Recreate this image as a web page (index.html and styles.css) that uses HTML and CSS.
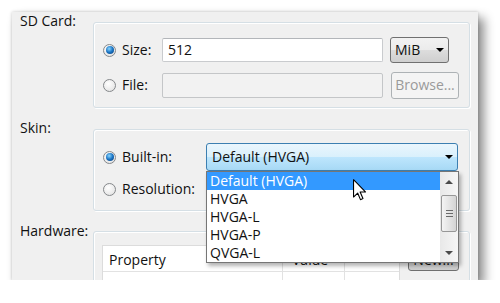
FILE: index.html
```html
<!DOCTYPE html>
<html lang="en">
<head>
    <meta charset="UTF-8">
    <title>AVD settings</title>
    <link rel="stylesheet" href="styles.css">
</head>
<body>
    <div class="window">

        <!-- SD CARD -->
        <section class="section">
            <div class="label">SD Card:</div>
            <div class="group sd">
                <div class="opt"><span class="radio on"></span>Size:</div>
                <div class="field">512</div>
                <div class="combo plain">MiB<span class="arrow"></span></div>
                <div class="opt"><span class="radio"></span>File:</div>
                <div class="field off"></div>
                <div class="btn off">Browse...</div>
            </div>
        </section>

        <!-- SKIN -->
        <section class="section">
            <div class="label">Skin:</div>
            <div class="group skin">
                <div class="opt"><span class="radio on"></span>Built-in:</div>
                <div class="combo-wrap">
                    <div class="combo hot">Default (HVGA)<span class="arrow"></span></div>
                    <div class="list">
                        <div class="items">
                            <div class="item sel">Default (HVGA)</div>
                            <div class="item">HVGA</div>
                            <div class="item">HVGA-L</div>
                            <div class="item">HVGA-P</div>
                            <div class="item">QVGA-L</div>
                        </div>
                        <div class="scroll">
                            <div class="sbtn"><span class="up"></span></div>
                            <div class="track"><div class="thumb"><span></span><span></span><span></span></div></div>
                            <div class="sbtn"><span class="down"></span></div>
                        </div>
                    </div>
                    <svg class="cursor" width="13" height="22" viewBox="0 0 12 20">
                        <path d="M0.5 0.5 V16.5 L4.3 12.8 L6.9 18.9 L9.2 17.9 L6.6 11.8 H11.5 Z" fill="#fff" stroke="#000" stroke-width="1" stroke-linejoin="round"/>
                    </svg>
                </div>
                <div class="opt"><span class="radio"></span>Resolution:</div>
                <div></div>
            </div>
        </section>

        <!-- HARDWARE -->
        <section class="section">
            <div class="label">Hardware:</div>
            <div class="group hw">
                <div class="table">
                    <div class="trow head">
                        <div class="cell c1">Property</div>
                        <div class="cell c2">Value</div>
                        <div class="cell c3"></div>
                    </div>
                    <div class="trow">
                        <div class="cell c1"></div>
                        <div class="cell c2"></div>
                        <div class="cell c3"></div>
                    </div>
                </div>
                <div class="btn new">New...</div>
            </div>
        </section>

    </div>
</body>
</html>
```

FILE: styles.css
```css
* {
    box-sizing: border-box;
    margin: 0;
    padding: 0;
}

body {
    background: #fff;
    font-family: "Open Sans", "Noto Sans", sans-serif;
    font-size: 14px;
    color: #111;
    padding: 12px 0 0 12px;
}

.window {
    width: 466px;
    height: 268px;
    background: #f0f0f0;
    overflow: hidden;
    padding: 0 8px;
    display: flex;
    flex-direction: column;
    gap: 11px;
    box-shadow: 0 0 3px rgba(0,0,0,0.2), 6px 6px 10px rgba(0,0,0,0.45);
}

.section {
    display: grid;
    grid-template-columns: 73px 377px;
    align-items: start;
}

.label {
    line-height: 17px;
}

.group {
    margin-top: 10px;
    border: 1px solid #d5dfe5;
    border-radius: 3px;
    box-shadow: inset 1px 1px 0 #fff, 1px 1px 0 #fff;
}

/* sd card box */
.sd {
    display: grid;
    grid-template-columns: 59px 221px 1fr;
    grid-auto-rows: 26px;
    row-gap: 9px;
    align-items: center;
    padding: 14px 10px 9px 9px;
}

.opt {
    display: flex;
    align-items: center;
    gap: 6px;
    line-height: 18px;
}

.radio {
    width: 13px;
    height: 13px;
    border-radius: 50%;
    border: 1px solid #85888b;
    background: radial-gradient(circle at 40% 35%, #ffffff, #dedede);
    display: flex;
    align-items: center;
    justify-content: center;
    flex: none;
}

.radio.on::after {
    content: "";
    width: 8px;
    height: 8px;
    border-radius: 50%;
    background: radial-gradient(circle at 40% 35%, #8ad6ff, #1a74c4 50%, #0b3a72);
}

.field {
    height: 24px;
    background: #fff;
    border: 1px solid #c9cbce;
    border-top-color: #b3b6ba;
    border-radius: 2px;
    padding-left: 5px;
    line-height: 22px;
}

.field.off {
    height: 25px;
    background: #f2f2f2;
    border-color: #c4c6c8;
}

.combo {
    height: 26px;
    border: 1px solid #707070;
    border-radius: 3px;
    display: flex;
    align-items: center;
    justify-content: space-between;
    line-height: 18px;
}

.combo.plain {
    width: 59px;
    margin-left: 7px;
    padding: 0 4px 0 4px;
    background: linear-gradient(#f2f2f2, #ebebeb 50%, #dddddd 50%, #cfcfcf);
}

.arrow {
    width: 0;
    height: 0;
    border-left: 4px solid transparent;
    border-right: 4px solid transparent;
    border-top: 4px solid #000;
}

.btn {
    height: 26px;
    border: 1px solid #707070;
    border-radius: 3px;
    background: linear-gradient(#f2f2f2, #ebebeb 50%, #dddddd 50%, #cfcfcf);
    display: flex;
    align-items: center;
    justify-content: center;
    line-height: 18px;
}

.btn.off {
    width: 68px;
    height: 27px;
    margin-left: 8px;
    border-color: #adb2b5;
    background: #f4f4f4;
    color: #9a9a9a;
}

/* skin box */
.skin {
    display: grid;
    grid-template-columns: 103px 1fr;
    grid-template-rows: 28px 26px;
    row-gap: 5px;
    align-items: center;
    padding: 13px 10px 8px 9px;
}

.combo-wrap {
    position: relative;
    height: 28px;
}

.combo.hot {
    width: 252px;
    height: 28px;
    padding: 0 4px 0 5px;
    border-color: #3c7fb1;
    background: linear-gradient(#eaf6fd, #d9f0fc 50%, #bee6fd 50%, #a7d9f5);
}

.list {
    position: absolute;
    top: 28px;
    left: 0;
    width: 253px;
    height: 92px;
    background: #fff;
    border: 1px solid #767676;
    display: flex;
    box-shadow: 2px 3px 4px rgba(0,0,0,0.3);
    z-index: 2;
}

.items {
    flex: 1;
}

.item {
    height: 18px;
    line-height: 18px;
    padding-left: 3px;
}

.item.sel {
    background: #3399ff;
    color: #fff;
}

.scroll {
    width: 18px;
    display: flex;
    flex-direction: column;
    background: linear-gradient(90deg, #e8e8e8, #f6f6f6);
}

.sbtn {
    height: 19px;
    display: flex;
    align-items: center;
    justify-content: center;
}

.up, .down {
    width: 0;
    height: 0;
    border-left: 4px solid transparent;
    border-right: 4px solid transparent;
}

.up {
    border-bottom: 4px solid #4a4a4a;
}

.down {
    border-top: 4px solid #4a4a4a;
}

.track {
    flex: 1;
}

.thumb {
    margin: 4px 1px 0 1px;
    height: 37px;
    border: 1px solid #979797;
    border-radius: 2px;
    background: linear-gradient(90deg, #f4f4f4, #e4e4e4 50%, #d4d4d4);
    display: flex;
    flex-direction: column;
    align-items: center;
    justify-content: center;
    gap: 2px;
}

.thumb span {
    width: 7px;
    height: 1px;
    background: #6a6a6a;
}

.cursor {
    position: absolute;
    left: 147px;
    top: 36px;
    z-index: 3;
}

/* hardware box */
.hw {
    margin-top: 9px;
    height: 80px;
    display: flex;
    gap: 8px;
    padding: 13px 8px 0 8px;
}

.table {
    width: 298px;
    background: #fff;
    border: 1px solid #dcdcdc;
    border-bottom: none;
}

.trow {
    display: flex;
    height: 26px;
}

.trow.head {
    border-bottom: 1px solid #e2e2e2;
    line-height: 27px;
}

.cell {
    border-right: 1px solid #e2e2e2;
}

.c1 {
    width: 180px;
    padding-left: 6px;
}

.c2 {
    width: 62px;
    padding-left: 9px;
}

.c3 {
    flex: 1;
    border-right: none;
}

.btn.new {
    width: 51px;
    padding-top: 4px;
}
```
